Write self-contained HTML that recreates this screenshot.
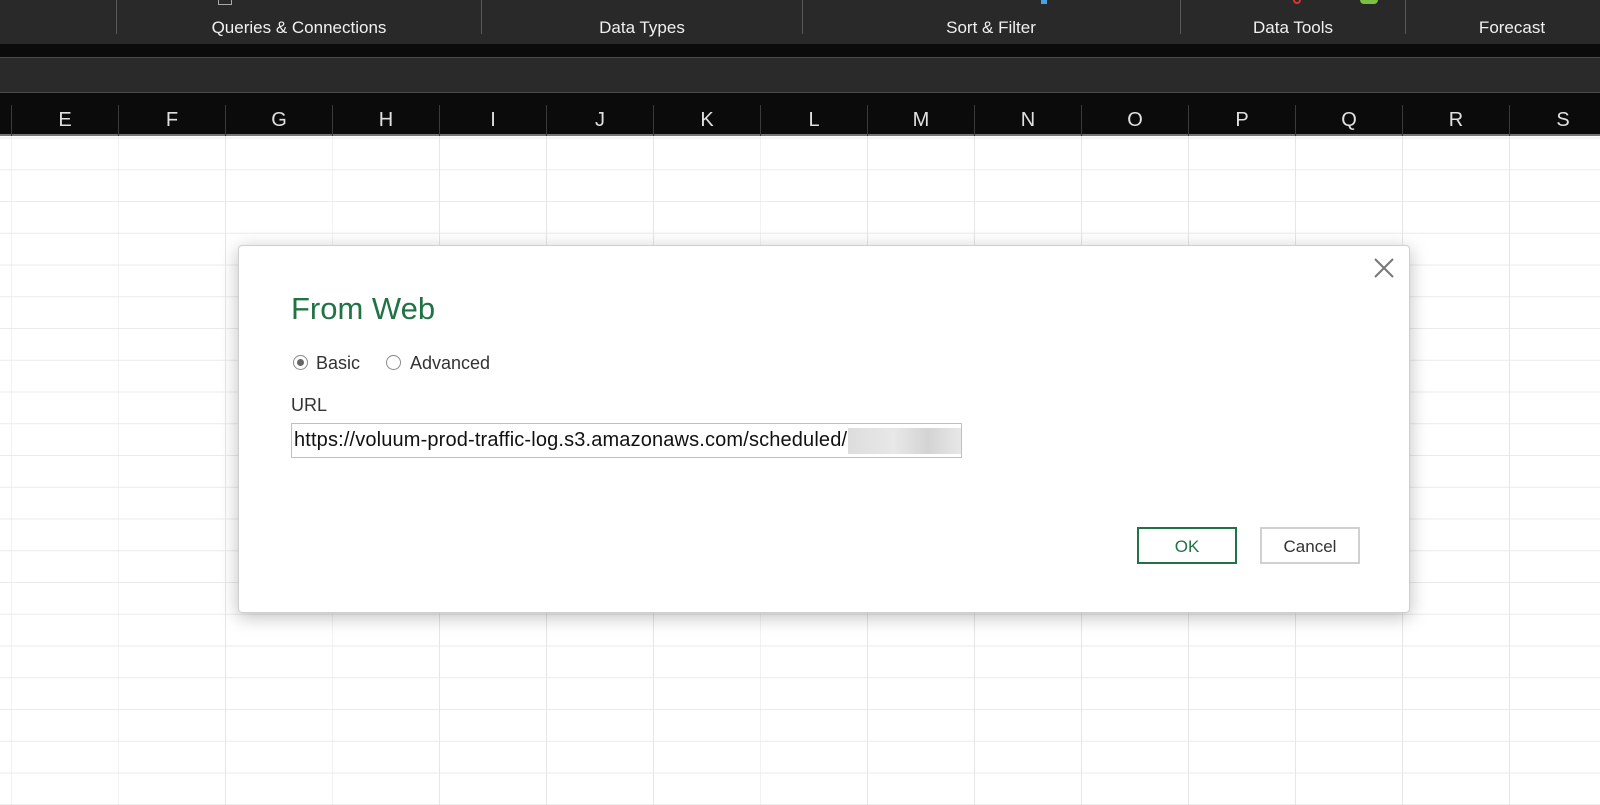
<!DOCTYPE html>
<html><head><meta charset="utf-8"><style>
*{margin:0;padding:0;box-sizing:border-box}
body{width:1600px;height:805px;overflow:hidden;background:#fff;font-family:"Segoe UI","Liberation Sans",sans-serif;position:relative}
.ribbon{position:absolute;left:0;top:0;width:1600px;height:44px;background:#292929}
.ribbon .lbl{position:absolute;top:18px;color:#f0f0f0;font-size:17px;transform:translateX(-50%);white-space:nowrap}
.ribbon .sep{position:absolute;top:0;width:1px;height:34px;background:#5a5a5a}
.black{position:absolute;top:44px;left:0;width:1600px;height:13px;background:#0b0b0b}
.fbar{position:absolute;top:57px;left:0;width:1600px;height:36px;background:#2a2a2a;border-top:1px solid #4a4a4a;border-bottom:1px solid #4a4a4a}
.hdr{position:absolute;top:93px;left:0;width:1600px;height:43px;background:#0b0b0b;border-bottom:2px solid #777}
.hdr .c{position:absolute;top:12px;height:31px;border-left:1px solid #3a3a3a}
.hdr .t{position:absolute;top:16px;color:#e0e0e0;font-size:20px;transform:translateX(-50%)}
.grid{position:absolute;top:136px;left:0;width:1600px;height:669px;
background-image:linear-gradient(to right,#e6e6e6 1px,transparent 1px),linear-gradient(to bottom,#ebebeb 1px,transparent 1px);
background-size:107px 31.75px;background-position:11px 1.5px}
.dlg{position:absolute;left:238px;top:245px;width:1172px;height:368px;background:#fff;border:1px solid #cfcfcf;border-radius:4px;box-shadow:0 4px 18px rgba(0,0,0,.25)}
.title{position:absolute;left:52px;top:45px;font-size:31px;color:#217346;font-weight:300}
.radio{position:absolute;top:109px;width:15px;height:15px;border:1px solid #888;border-radius:50%}
.radio.on::after{content:"";position:absolute;left:3px;top:3px;width:7px;height:7px;border-radius:50%;background:#666}
.rl{position:absolute;top:107px;font-size:18px;color:#333}
.url{position:absolute;left:52px;top:149px;font-size:18px;color:#333}
.inp{position:absolute;left:52px;top:177px;width:671px;height:35px;border:1px solid #9ed4b4;font-size:20px;color:#111;padding:5px 0 0 2px;white-space:nowrap;overflow:hidden;letter-spacing:0.15px}
.blur{position:absolute;left:556px;top:4px;width:114px;height:26px;background:linear-gradient(to right,#ddd,#e8e8e8 40%,#d4d4d4 70%,#e8e8e8)}
.btn{position:absolute;top:281px;width:100px;height:37px;font-size:17px;text-align:center;line-height:35px}
.ok{left:898px;border:2px solid #217346;color:#217346}
.cancel{left:1021px;border:2px solid #d0d0d0;color:#333}
</style></head><body>
<div class="ribbon">
<div class="sep" style="left:116px"></div><div class="sep" style="left:481px"></div><div class="sep" style="left:802px"></div><div class="sep" style="left:1180px"></div><div class="sep" style="left:1405px"></div>
<div class="lbl" style="left:299px">Queries &amp; Connections</div>
<div class="lbl" style="left:642px">Data Types</div>
<div class="lbl" style="left:991px">Sort &amp; Filter</div>
<div class="lbl" style="left:1293px">Data Tools</div>
<div class="lbl" style="left:1512px">Forecast</div>
<div style="position:absolute;left:218px;top:0;width:14px;height:5px;border:1px solid #aaa;border-top:none"></div>
<div style="position:absolute;left:1041px;top:0;width:6px;height:4px;background:#4aa3e0"></div>
<div style="position:absolute;left:1293px;top:0;width:8px;height:4px;border:2px solid #d33;border-top:none;border-radius:0 0 4px 4px"></div>
<div style="position:absolute;left:1360px;top:0;width:18px;height:4px;background:#7bc043;border-radius:0 0 8px 8px"></div>
</div>
<div class="black"></div>
<div class="fbar"></div>
<div class="hdr">
<div class="c" style="left:11px"></div><div class="c" style="left:118px"></div><div class="c" style="left:225px"></div><div class="c" style="left:332px"></div><div class="c" style="left:439px"></div><div class="c" style="left:546px"></div><div class="c" style="left:653px"></div><div class="c" style="left:760px"></div><div class="c" style="left:867px"></div><div class="c" style="left:974px"></div><div class="c" style="left:1081px"></div><div class="c" style="left:1188px"></div><div class="c" style="left:1295px"></div><div class="c" style="left:1402px"></div><div class="c" style="left:1509px"></div>
<div class="t" style="left:65px">E</div><div class="t" style="left:172px">F</div><div class="t" style="left:279px">G</div><div class="t" style="left:386px">H</div><div class="t" style="left:493px">I</div><div class="t" style="left:600px">J</div><div class="t" style="left:707px">K</div><div class="t" style="left:814px">L</div><div class="t" style="left:921px">M</div><div class="t" style="left:1028px">N</div><div class="t" style="left:1135px">O</div><div class="t" style="left:1242px">P</div><div class="t" style="left:1349px">Q</div><div class="t" style="left:1456px">R</div><div class="t" style="left:1563px">S</div>
</div>
<div class="grid"></div>
<div class="dlg">
<svg style="position:absolute;left:1134px;top:11px" width="22" height="22" viewBox="0 0 22 22"><path d="M2 2L20 20M20 2L2 20" stroke="#777" stroke-width="2"/></svg>
<div class="title">From Web</div>
<div class="radio on" style="left:54px"></div><div class="rl" style="left:77px">Basic</div>
<div class="radio" style="left:147px"></div><div class="rl" style="left:171px">Advanced</div>
<div class="url">URL</div>
<div class="inp">https://voluum-prod-traffic-log.s3.amazonaws.com/scheduled/<div class="blur"></div></div>
<div class="btn ok">OK</div>
<div class="btn cancel">Cancel</div>
</div>
</body></html>
